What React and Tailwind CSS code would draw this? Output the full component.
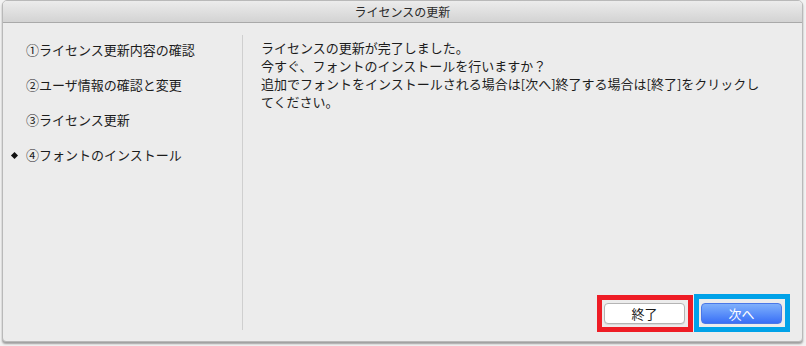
import React from 'react'

const steps = [
  { label: '①ライセンス更新内容の確認', active: false },
  { label: '②ユーザ情報の確認と変更', active: false },
  { label: '③ライセンス更新', active: false },
  { label: '④フォントのインストール', active: true },
]

export default function App() {
  return (
    <div
      className="w-[806px] h-[346px] bg-[#f2f2f2] pl-[2px] pr-[3px] pb-[4px] text-[#1c1c1c]"
      style={{ fontFamily: '"Noto Sans CJK JP", "Liberation Sans", sans-serif' }}
    >
      <div className="flex flex-col h-full bg-[#ececec] border border-[#b9b9b9] rounded-t-[5px] rounded-b-[4px] shadow-[0_2px_2px_rgba(0,0,0,0.35)] overflow-hidden">
        {/* title bar */}
        <div className="h-[22px] shrink-0 flex items-center justify-center bg-gradient-to-b from-[#ececec] to-[#d3d3d3] border-b border-[#a9a9a9] text-[12px] leading-none text-[#2a2a2a]">
          ライセンスの更新
        </div>

        <div className="flex flex-1 min-h-0">
          {/* steps */}
          <div className="w-[239px] shrink-0 pt-[18px] pl-[7px] flex flex-col gap-[17px]">
            {steps.map((s) => (
              <div key={s.label} className="flex items-center h-[18px] text-[13px] leading-[18px]">
                <div className="w-[16px] flex items-center pl-[2px]">
                  {s.active && <div className="w-[5px] h-[5px] rotate-45 bg-[#111]" />}
                </div>
                <span>{s.label}</span>
              </div>
            ))}
          </div>

          <div className="w-px bg-[#cfcfcf] mt-[12px] mb-[11px]" />

          {/* content */}
          <div className="flex-1 flex flex-col pl-[18px] pt-[16px] pr-[12px] pb-[9px]">
            <p className="text-[13px] leading-[18px]">
              ライセンスの更新が完了しました。
              <br />
              今すぐ、フォントのインストールを行いますか？
              <br />
              追加でフォントをインストールされる場合は[次へ]終了する場合は[終了]をクリックし
              <br />
              てください。
            </p>

            <div className="mt-auto flex justify-end gap-[1px]">
              <div className="w-[96px] h-[37px] border-[5px] border-[#ee1c25] pl-[2px] pr-[3px] pt-[3px]">
                <button className="w-full h-[21px] rounded-[4px] bg-white border border-[#b4b4b4] shadow-[0_1px_0_rgba(0,0,0,0.08)] text-[13px] leading-none text-[#1a1a1a] flex items-center justify-center">
                  終了
                </button>
              </div>
              <div className="w-[96px] h-[38px] -mt-[1px] border-[5px] border-[#00a2e8] pl-[2px] pr-[3px] pt-[4px]">
                <button className="w-full h-[21px] rounded-[4px] bg-gradient-to-b from-[#80b0fb] to-[#3a6ef6] border border-[#4a78e8] text-[13px] leading-none text-white flex items-center justify-center">
                  次へ
                </button>
              </div>
            </div>
          </div>
        </div>
      </div>
    </div>
  )
}
